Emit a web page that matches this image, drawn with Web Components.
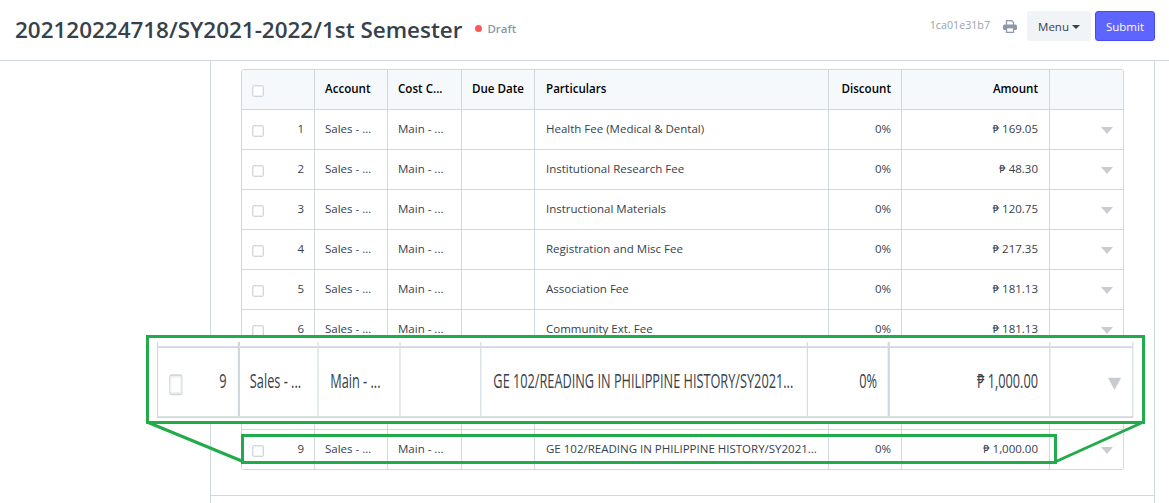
<!DOCTYPE html>
<html><head><meta charset="utf-8"><style>
html,body{margin:0;padding:0;background:#fff;height:503px;overflow:hidden}
body{font-family:"Open Sans","Noto Sans",sans-serif;color:#36414c}
</style></head><body>
<template id="page-head-t"><style>
:host{display:flex;align-items:center;height:60px;border-bottom:1px solid #d1d8dd;padding:0 14px 0 15px}
h1{margin:0 0 2px;font-size:22.45px;font-weight:600;color:#36414c;white-space:nowrap}
.ind{margin:0 0 3px 13px;font-size:11.5px;font-weight:600;color:#8d99a6;display:flex;align-items:center;gap:5px}
.dot{width:7px;height:7px;border-radius:50%;background:#ff5858}
.sp{flex:1}
.right{display:flex;align-items:center;margin-bottom:8px}
.id{font-size:10.7px;color:#98a3ad;margin:0 13px 2px 0}
svg{display:block;margin-right:10px}
button{font:inherit;font-size:11.5px;height:30px;border-radius:3px;border:1px solid transparent;padding:0;box-sizing:border-box}
.m{background:#f0f4f7;color:#36414c;margin-right:4px;width:64px}
.s{background:#5e64ff;border-color:#444bff;color:#fff;width:60px}
.c{display:inline-block;border:4px solid transparent;border-top-color:#36414c;border-bottom:0;margin-left:3px;vertical-align:2px}
</style><h1><slot></slot></h1><div class="ind"><span class="dot"></span>Draft</div><div class="sp"></div>
<div class="right"><span class="id">1ca01e31b7</span>
<svg width="14" height="13" viewBox="0 0 14 13"><path d="M3.500 5V.7h5.300l1.700 1.700V5" fill="none" stroke="#8d99a6" stroke-width="1.300"/><rect y="4.500" width="14" height="5.500" rx="1.500" fill="#8d99a6"/><rect x="3.500" y="7.700" width="7" height="4.700" fill="#fff" stroke="#8d99a6" stroke-width="1.300"/></svg>
<button class="m">Menu<span class="c"></span></button><button class="s">Submit</button></div></template>
<template id="grid-row-t"><style>
:host{display:grid;grid-template-columns:var(--cols,73px 73px 74px 73px 294px 73px 148px 75px);height:40px;box-sizing:border-box;font-size:11.5px;color:#36414c;border-bottom:1px solid #d1d8dd;background:#fff}
:host([head]){background:#f6f9fc;color:#000;font-weight:600;font-size:11.6px}
.c{border-left:1px solid #d1d8dd;padding:0 10px 2px;display:flex;align-items:center;white-space:nowrap;height:39px;box-sizing:border-box;min-width:0}
.c.i{justify-content:space-between}
.c.r{justify-content:flex-end}
.c:nth-of-type(5){padding-left:11px}
.c:nth-of-type(7){padding-right:11px}
:host([lens]) .c:nth-of-type(2),:host([lens]) .c:nth-of-type(7){border-left-width:2px}
:host([lens]) .c:nth-of-type(2){padding-left:9px}
:host([lens]) .c:nth-of-type(7){padding-right:10px}
.c:last-child{justify-content:flex-end;border-right:1px solid #d1d8dd}
.b{width:12px;height:12px;box-sizing:border-box;border:1px solid #d1d8dd;box-shadow:inset 0 0 0 1px #eef1f4;border-radius:2px;background:#fff;display:block;margin-top:5px}
.a{width:0;height:0;border:6px solid transparent;border-top:7px solid #c8ccd0;border-bottom:0;margin:4px 0 0 0}
</style></template>
<template id="zoom-lens-t"><style>
:host{display:block;position:absolute;left:146px;top:335px;width:999px;height:89px;box-sizing:border-box;border:3px solid #22ab4a;background:#fff;overflow:hidden}
.clip{position:absolute;left:8px;top:4px;width:978px;height:77px;overflow:hidden}
.in{position:absolute;left:0;top:-64px;transform-origin:0 0;transform:scale(1.107,1.75);--cols:72.9px 72.6px 73.2px 73.2px 295.4px 73.200px 145.400px 76px}
</style><div class="clip"><div class="in"><slot></slot></div></div></template>
<script>
function sh(el,id){const r=el.attachShadow({mode:'open'});r.appendChild(document.getElementById(id).content.cloneNode(true));return r}
customElements.define('page-head',class extends HTMLElement{constructor(){super();sh(this,'page-head-t')}});
customElements.define('grid-row',class extends HTMLElement{constructor(){super();this.r=sh(this,'grid-row-t')}
connectedCallback(){const g=n=>this.getAttribute(n)||'';const head=this.hasAttribute('head'),blank=this.hasAttribute('blank');
const cells=[[g('idx'),'i'],[g('account'),''],[g('cost'),''],[g('due'),''],[g('part'),''],[g('disc'),'r'],[g('amt'),'r'],['','']];
cells.forEach(([t,k],i)=>{const c=document.createElement('div');c.className='c '+k;
if(i==0&&!blank){const b=document.createElement('span');b.className='b';c.appendChild(b)}
if(t){const s=document.createElement('span');s.textContent=t;c.appendChild(s)}
if(i==7&&!head&&!blank){const a=document.createElement('span');a.className='a';c.appendChild(a)}
this.r.appendChild(c)})}});
customElements.define('grid-table',class extends HTMLElement{constructor(){super();const r=this.attachShadow({mode:'open'});r.innerHTML='<style>:host{display:block;width:883px;border-top:1px solid #d1d8dd;border-radius:3px;overflow:hidden}</style><slot></slot>'}});
customElements.define('zoom-lens',class extends HTMLElement{constructor(){super();sh(this,'zoom-lens-t')}});
customElements.define('main-pane',class extends HTMLElement{constructor(){super();const r=this.attachShadow({mode:'open'});r.innerHTML='<style>:host{display:block;margin-left:210px;width:945px;height:442px;box-sizing:border-box;border-left:1px solid #d1d8dd;border-right:1px solid #d1d8dd;padding:8px 0 0 30px}.l{height:1px;background:#d1d8dd;margin:25px 0 0 -30px}</style><slot></slot><div class="l"></div>'}});
</script>
<page-head>202120224718/SY2021-2022/1st Semester</page-head>
<main-pane><grid-table>
<grid-row head account="Account" cost="Cost C..." due="Due Date" part="Particulars" disc="Discount" amt="Amount"></grid-row>
<grid-row idx="1" account="Sales - ..." cost="Main - ..." part="Health Fee (Medical &amp; Dental)" disc="0%" amt="₱ 169.05"></grid-row>
<grid-row idx="2" account="Sales - ..." cost="Main - ..." part="Institutional Research Fee" disc="0%" amt="₱ 48.30"></grid-row>
<grid-row idx="3" account="Sales - ..." cost="Main - ..." part="Instructional Materials" disc="0%" amt="₱ 120.75"></grid-row>
<grid-row idx="4" account="Sales - ..." cost="Main - ..." part="Registration and Misc Fee" disc="0%" amt="₱ 217.35"></grid-row>
<grid-row idx="5" account="Sales - ..." cost="Main - ..." part="Association Fee" disc="0%" amt="₱ 181.13"></grid-row>
<grid-row idx="6" account="Sales - ..." cost="Main - ..." part="Community Ext. Fee" disc="0%" amt="₱ 181.13"></grid-row>
<grid-row blank></grid-row><grid-row blank></grid-row>
<grid-row idx="9" account="Sales - ..." cost="Main - ..." part="GE 102/READING IN PHILIPPINE HISTORY/SY2021..." disc="0%" amt="₱ 1,000.00"></grid-row>
</grid-table></main-pane>
<zoom-lens><grid-row blank lens></grid-row><grid-row lens idx="9" account="Sales - ..." cost="Main - ..." part="GE 102/READING IN PHILIPPINE HISTORY/SY2021..." disc="0%" amt="₱ 1,000.00"></grid-row></zoom-lens>
<svg style="position:absolute;left:0;top:0" width="1169" height="503" fill="none" stroke="#22ab4a" stroke-width="3"><rect x="242.500" y="435.500" width="813" height="27"/><path d="M147 422L243 461.500M1143.500 422L1056 461.500"/></svg>
</body></html>
